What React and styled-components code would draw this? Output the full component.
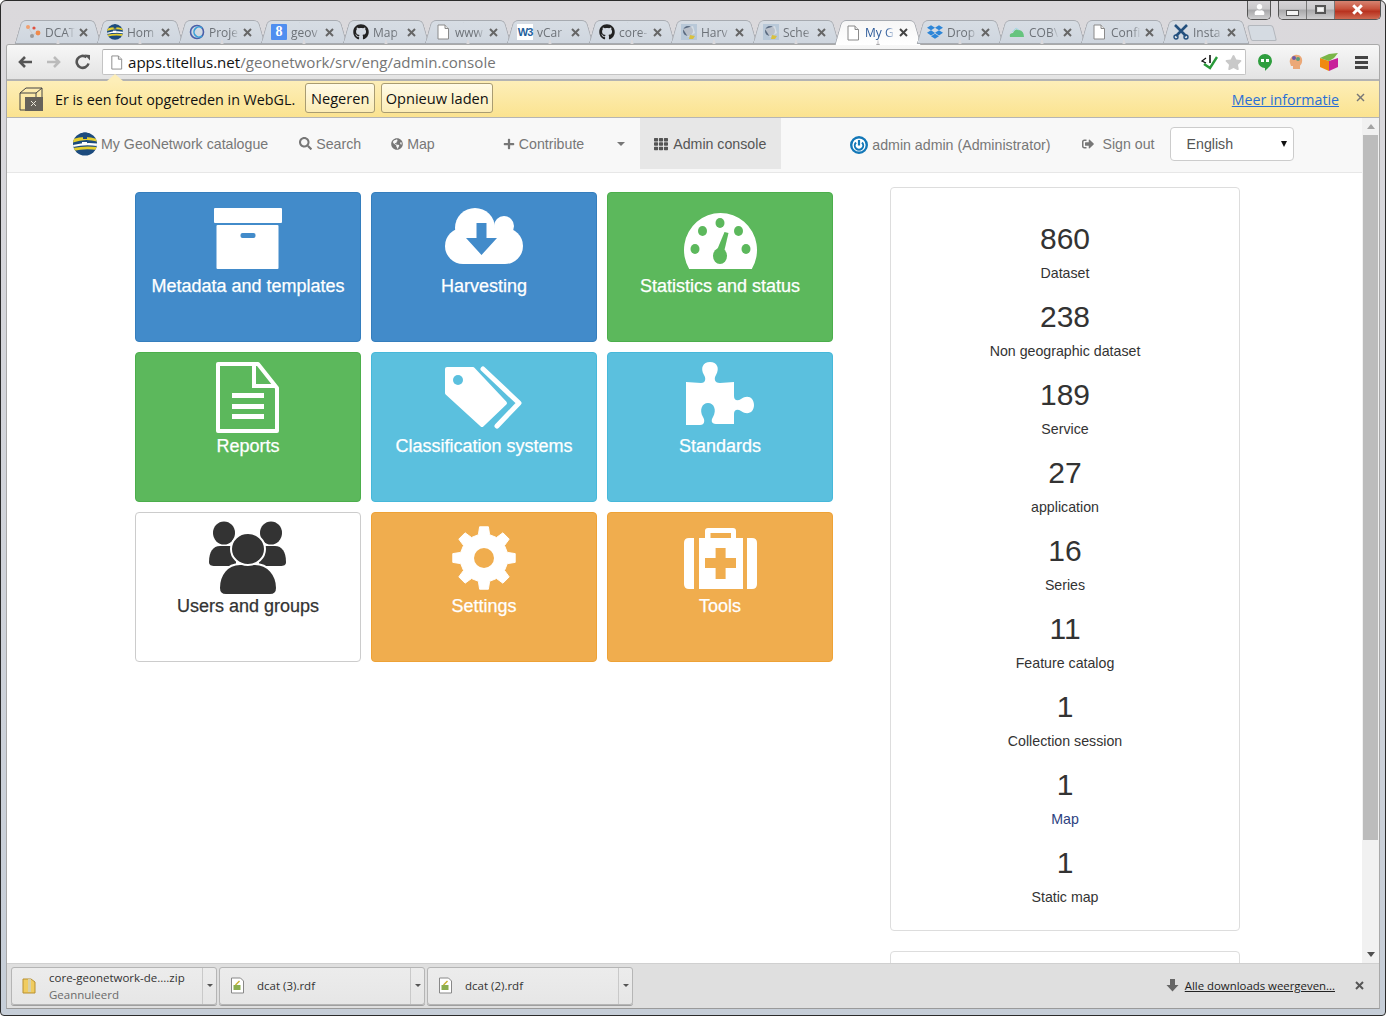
import React from 'react'
import styled, { createGlobalStyle } from 'styled-components'
import { FaGithub, FaDropbox, FaSearch, FaGlobeAmericas, FaPlus, FaTh, FaSignOutAlt, FaUser, FaStar } from 'react-icons/fa'

const GlobalStyle = createGlobalStyle`
  html, body {
    margin: 0;
    padding: 0;
    overflow: hidden;
    background: #fff;
  }
`;

const UI_FONT = `"Open Sans", "Noto Sans", sans-serif`;
const PAGE_FONT = `"Liberation Sans", Arial, sans-serif`;

/* ---------- window chrome ---------- */

const Win = styled.div`
  width: 1386px;
  height: 1016px;
  box-sizing: border-box;
  display: flex;
  flex-direction: column;
  overflow: hidden;
  border: 1px solid #2b2b2b;
  border-radius: 6px 6px 4px 4px;
  padding-bottom: 6px;
  background: linear-gradient(#dbd9dc 0, #d9d8dc 130px, #c6ced8 100%);
  font-family: ${UI_FONT};
`;

const CaptionRow = styled.div`
  height: 19px;
  flex: none;
  display: flex;
  justify-content: flex-end;
  gap: 7px;
  padding-right: 4px;
`;

const CaptionGroup = styled.div`
  display: flex;
  margin-top: -1px;
  height: 19px;
  border: 1px solid #555;
  border-top: none;
  border-radius: 0 0 5px 5px;
  overflow: hidden;
`;

const CaptionBtn = styled.div`
  width: ${p => p.$w}px;
  display: flex;
  align-items: center;
  justify-content: center;
  color: #fff;
  border-left: ${p => (p.$first ? 'none' : '1px solid #777')};
  background: ${p => (p.$close
    ? 'linear-gradient(#d98a78 0, #c8543e 45%, #b8321f 60%, #cf6a52 100%)'
    : 'linear-gradient(#d8d6d9 0, #c9c8ca 45%, #a9a9ab 55%, #cfcfd0 100%)')};
`;

const MinGlyph = styled.span`
  width: 11px;
  height: 4px;
  margin-top: 6px;
  background: #f4f4f4;
  border: 1px solid #555;
`;

const MaxGlyph = styled.span`
  width: 7px;
  height: 5px;
  background: #f4f4f4;
  border: 2px solid #555;
  box-shadow: inset 0 0 0 1px #ddd;
`;

const TabStrip = styled.div`
  height: 24px;
  flex: none;
  display: flex;
  padding-left: 13px;
  position: relative;
  z-index: 1;
`;

const Tab = styled.div`
  position: relative;
  isolation: isolate;
  box-sizing: border-box;
  width: 82px;
  height: ${p => (p.$active ? 25 : 24)}px;
  flex: none;
  display: flex;
  align-items: center;
  padding: 0 8px 0 11px;
  font-size: 12px;
  color: ${p => (p.$active ? '#2c5a9a' : '#6d7278')};
  &::before, &::after {
    content: '';
    position: absolute;
    top: 0;
    bottom: 0;
    width: 42px;
    z-index: -1;
    box-sizing: border-box;
    border: 1px solid #a7abb1;
    border-bottom: ${p => (p.$active ? 'none' : '1px solid #a7abb1')};
    background: ${p => (p.$active ? 'linear-gradient(#f6f6f6, #fff)' : 'linear-gradient(#d7dde4, #cfd6df)')};
  }
  &::before {
    left: 4px;
    border-right: none;
    border-radius: 5px 0 0 0;
    transform: skewX(-16deg);
  }
  &::after {
    right: -2px;
    border-left: none;
    border-radius: 0 5px 0 0;
    transform: skewX(16deg);
  }
`;

const NewTab = styled.div`
  width: 24px;
  height: 14px;
  margin: 5px 0 0 5px;
  background: #d5dbe2;
  border: 1px solid #b3b7bd;
  border-radius: 3px 3px 2px 2px;
  transform: skewX(14deg);
`;

const Fav = styled.span`
  width: 16px;
  height: 16px;
  flex: none;
  display: flex;
  align-items: center;
  justify-content: center;
`;

const TabLabel = styled.span`
  width: 30px;
  margin-left: 4px;
  overflow: hidden;
  white-space: nowrap;
  -webkit-mask-image: linear-gradient(to right, #000 70%, transparent);
  mask-image: linear-gradient(to right, #000 70%, transparent);
`;

const TabClose = styled.svg`
  width: 9px;
  height: 9px;
  margin-left: auto;
  flex: none;
`;

const W3Box = styled.span`
  width: 16px;
  height: 16px;
  background: #fff;
  color: #1f5f9c;
  font: bold 11px/16px ${PAGE_FONT};
  letter-spacing: -1px;
  text-align: center;
`;

const GBox = styled.span`
  width: 16px;
  height: 16px;
  background: #4f8ef0;
  color: #fff;
  border-radius: 1px;
  font: bold 14px/15px "Liberation Serif", serif;
  text-align: center;
`;

const Surface = styled.div`
  flex: 1;
  min-height: 0;
  margin: 0 5px;
  display: flex;
  flex-direction: column;
  border: 1px solid #a9a9a9;
  border-bottom: 1px solid #9a9a9a;
  border-radius: 3px 3px 0 0;
  overflow: hidden;
`;

const Toolbar = styled.div`
  height: 34px;
  flex: none;
  display: flex;
  align-items: center;
  border-bottom: 2px solid #b3b3b3;
  background: linear-gradient(#f7f7f7, #e3e3e3);
`;

const NavGlyph = styled.svg`
  width: 16px;
  height: 16px;
  flex: none;
  margin-left: ${p => p.$ml}px;
`;

const Omnibox = styled.div`
  width: 1144px;
  height: 26px;
  margin-left: 11px;
  flex: none;
  box-sizing: border-box;
  display: flex;
  align-items: center;
  padding: 0 3px 0 6px;
  background: #fff;
  border: 1px solid #c4c4c4;
  border-top-color: #a8a8a8;
  border-radius: 2px;
  font-size: 15.1px;
  color: #757575;
`;

const UrlHost = styled.span`
  color: #111;
`;

const UrlText = styled.span`
  margin-left: 4px;
  white-space: nowrap;
`;

const OmniEnd = styled.span`
  margin-left: auto;
  display: flex;
  align-items: center;
  gap: 6px;
  color: #c9c9c9;
`;

const ExtRow = styled.div`
  display: flex;
  align-items: center;
  gap: 14px;
  margin-left: 11px;
`;

const MenuBars = styled.span`
  width: 13px;
  height: 13px;
  margin-left: 2px;
  background: repeating-linear-gradient(#444 0 3px, transparent 3px 5px);
`;

/* ---------- infobar ---------- */

const Infobar = styled.div`
  position: relative;
  height: 36px;
  flex: none;
  display: flex;
  align-items: center;
  padding-left: 12px;
  font-size: 14.3px;
  color: #111;
  background: linear-gradient(#fdeeb8, #fbe390);
  border-bottom: 1px solid #b5b5b5;
  &::before {
    content: '';
    position: absolute;
    left: 100px;
    top: -7px;
    width: 16px;
    height: 7px;
    background: #fdeeb8;
    clip-path: polygon(50% 0, 100% 100%, 0 100%);
  }
`;

const InfoText = styled.span`
  margin: 1px 0 0 11px;
  white-space: nowrap;
`;

const InfoBtn = styled.div`
  height: 30px;
  margin-left: ${p => p.$ml}px;
  margin-top: -3px;
  box-sizing: border-box;
  width: ${p => p.$w}px;
  display: flex;
  align-items: center;
  justify-content: center;
  border: 1px solid #a99c72;
  border-radius: 3px;
  background: linear-gradient(#fffbe8, #fcedb6);
  font-size: 14.6px;
  white-space: nowrap;
`;

const InfoLink = styled.a`
  margin: 1px 0 0 auto;
  color: #2a6fd6;
  font-size: 14.2px;
  text-decoration: underline;
  white-space: nowrap;
`;

const InfoClose = styled.svg`
  width: 9px;
  height: 9px;
  margin: -4px 14px 0 17px;
`;

/* ---------- page ---------- */

const PageRow = styled.div`
  flex: 1;
  min-height: 0;
  display: flex;
  background: #fff;
`;

const Page = styled.div`
  flex: 1;
  min-width: 0;
  overflow: hidden;
  font-family: ${PAGE_FONT};
  color: #333;
`;

const Navbar = styled.div`
  height: 54px;
  display: flex;
  align-items: flex-start;
  padding-left: 66px;
  background: #f8f8f8;
  border-bottom: 1px solid #e7e7e7;
  font-size: 14.2px;
  color: #777;
`;

const NavItem = styled.div`
  height: 51px;
  flex: none;
  display: flex;
  align-items: center;
  gap: ${p => p.$gap ?? 4}px;
  margin-left: ${p => p.$ml ?? 0}px;
  padding: ${p => (p.$active ? '0 15px 0 14px' : '0')};
  background: ${p => (p.$active ? '#e7e7e7' : 'transparent')};
  color: ${p => (p.$active ? '#555' : '#777')};
  white-space: nowrap;
`;

const Caret = styled.span`
  width: 0;
  height: 0;
  margin-left: ${p => p.$ml}px;
  align-self: center;
  margin-top: -2px;
  border-left: 4px solid transparent;
  border-right: 4px solid transparent;
  border-top: 4px solid #777;
`;

const PowerIcon = styled.svg`
  width: 18px;
  height: 18px;
  margin-top: 2px;
  flex: none;
`;

const UserText = styled.span`
  margin-top: 2px;
`;

const LangSelect = styled.div`
  width: 124px;
  height: 34px;
  margin: 9px 0 0 15px;
  box-sizing: border-box;
  flex: none;
  display: flex;
  align-items: center;
  justify-content: space-between;
  padding: 0 6px 0 16px;
  background: #fff;
  border: 1px solid #ccc;
  border-radius: 4px;
  color: #555;
`;

const SelectArrow = styled.span`
  width: 0;
  height: 0;
  border-left: 3.5px solid transparent;
  border-right: 3.5px solid transparent;
  border-top: 6px solid #111;
`;

const Dashboard = styled.div`
  display: flex;
  align-items: flex-start;
  padding-left: 128px;
`;

const TileGrid = styled.div`
  display: grid;
  grid-template-columns: repeat(3, 226px);
  grid-auto-rows: 150px;
  gap: 10px;
  margin-top: 19px;
`;

const TONES = {
  primary: { bg: '#428bca', border: '#357ebd', fg: '#fff' },
  success: { bg: '#5cb85c', border: '#4cae4c', fg: '#fff' },
  info: { bg: '#5bc0de', border: '#46b8da', fg: '#fff' },
  warning: { bg: '#f0ad4e', border: '#eea236', fg: '#fff' },
  plain: { bg: '#fff', border: '#ccc', fg: '#333' },
};

const Tile = styled.div`
  box-sizing: border-box;
  border: 1px solid ${p => TONES[p.$tone].border};
  border-radius: 4px;
  background: ${p => TONES[p.$tone].bg};
  color: ${p => TONES[p.$tone].fg};
  text-align: center;
`;

const TileIcon = styled.svg`
  display: block;
  width: 224px;
  height: 83px;
`;

const TileLabel = styled.div`
  font-size: 18px;
  line-height: 20px;
  font-weight: 500;
  -webkit-text-stroke: 0.25px currentColor;
`;

const SideColumn = styled.div`
  width: 350px;
  margin: 14px 0 0 57px;
  flex: none;
`;

const Panel = styled.div`
  box-sizing: border-box;
  height: ${p => p.$h}px;
  margin-bottom: 20px;
  padding: 33px 0 0;
  border: 1px solid #ddd;
  border-radius: 4px;
  text-align: center;
  background: #fff;
`;

const Stat = styled.div`
  height: 78px;
`;

const StatNumber = styled.div`
  font-size: 30px;
  line-height: 36px;
  color: #333;
`;

const StatLabel = styled.div`
  margin-top: 6px;
  font-size: 14.2px;
  line-height: 20px;
  color: ${p => (p.$link ? '#2d3f80' : '#333')};
`;

const Scrollbar = styled.div`
  width: 17px;
  flex: none;
  display: flex;
  flex-direction: column;
  background: #f1f1f1;
`;

const ScrollBtn = styled.div`
  height: 17px;
  flex: none;
  display: flex;
  align-items: center;
  justify-content: center;
  margin-top: ${p => (p.$up ? '0' : 'auto')};
  &::after {
    content: '';
    border-left: 4px solid transparent;
    border-right: 4px solid transparent;
    ${p => (p.$up ? 'border-bottom: 5px solid #a3a3a3;' : 'border-top: 5px solid #505050;')}
  }
`;

const ScrollThumb = styled.div`
  height: 705px;
  margin: 0 1px;
  background: #bcbcbc;
`;

/* ---------- download shelf ---------- */

const Shelf = styled.div`
  height: 43px;
  flex: none;
  display: flex;
  align-items: center;
  padding: 0 15px 1px 4px;
  background: #dfdfdf;
  border-top: 1px solid #d0d0d0;
  font-size: 11.5px;
  color: #333;
  gap: 2px;
`;

const Chip = styled.div`
  box-sizing: border-box;
  width: 206px;
  height: 38px;
  display: flex;
  background: linear-gradient(#ececec, #e6e6e6);
  border: 1px solid #b5b5b5;
  border-radius: 3px;
  box-shadow: 0 1px 0 #9f9f9f;
`;

const ChipBody = styled.div`
  flex: 1;
  display: flex;
  align-items: center;
  padding-left: 10px;
  gap: 11px;
`;

const ChipText = styled.div`
  line-height: 17px;
  white-space: nowrap;
`;

const ChipSub = styled.div`
  color: #6b6b6b;
`;

const ChipMenu = styled.div`
  width: 13px;
  flex: none;
  display: flex;
  align-items: center;
  justify-content: center;
  border-left: 1px solid #c9c9c9;
  &::after {
    content: '';
    border-left: 3px solid transparent;
    border-right: 3px solid transparent;
    border-top: 3px solid #555;
  }
`;

const ShelfEnd = styled.div`
  margin-left: auto;
  display: flex;
  align-items: center;
`;

const AllLink = styled.a`
  margin-left: 6px;
  color: #222;
  font-size: 11.4px;
  text-decoration: underline;
  white-space: nowrap;
`;

const ShelfClose = styled.svg`
  width: 9px;
  height: 9px;
  margin-left: 20px;
`;

/* ---------- drawings ---------- */

const Cross = ({ color = '#666', w = 2 }) => (
  <>
    <line x1="1" y1="1" x2="8" y2="8" stroke={color} strokeWidth={w} />
    <line x1="8" y1="1" x2="1" y2="8" stroke={color} strokeWidth={w} />
  </>
);

const DocIcon = ({ size = 16 }) => (
  <svg width={size} height={size} viewBox="0 0 16 16">
    <path d="M3 1H10L13.5 4.5V15H3Z" fill="#fff" stroke="#8a8a8a" />
    <path d="M10 1V4.5H13.5" fill="#e8e8e8" stroke="#8a8a8a" />
  </svg>
);

const GeoLogo = ({ size = 24, id = 'geo-clip' }) => (
  <svg width={size} height={size} viewBox="0 0 24 24">
    <defs>
      <clipPath id={id}><ellipse cx="12" cy="12" rx="12" ry="11.5" /></clipPath>
    </defs>
    <g clipPath={`url(#${id})`}>
      <rect width="24" height="24" fill="#1c4b7e" />
      <path d="M0 7Q12 3 24 7V9.500Q12 6 0 10.500Z" fill="#e6cf2e" />
      <path d="M0 13Q12 10 24 11.500V14Q12 12 0 15Z" fill="#fff" />
      <path d="M0 16Q12 13.500 24 15V18Q12 16 0 19Z" fill="#e6cf2e" />
      <rect x="10" y="0" width="4" height="7" fill="#1c4b7e" />
      <rect x="9" y="10" width="5" height="3" fill="#fff" />
    </g>
  </svg>
);

const Favicon = ({ kind }) => {
  switch (kind) {
    case 'dots':
      return (
        <svg width="16" height="16" viewBox="0 0 16 16">
          <path d="M3 3L8 11L13 8" stroke="#ccc" fill="none" />
          <circle cx="3" cy="3" r="2" fill="#f0a070" />
          <circle cx="9" cy="4" r="1.6" fill="#e05040" />
          <circle cx="7" cy="12" r="2" fill="#999" />
          <circle cx="13" cy="9" r="2.4" fill="#f08a4a" />
        </svg>
      );
    case 'geo':
      return <GeoLogo size={16} id="geo-tab-clip" />;
    case 'ring':
      return (
        <svg width="16" height="16" viewBox="0 0 16 16">
          <circle cx="8" cy="8" r="6.5" fill="none" stroke="#4a5fa8" strokeWidth="1.6" />
          <path d="M13 4A5 5 0 1 0 13 12" fill="none" stroke="#3aa0d8" strokeWidth="1.6" />
        </svg>
      );
    case 'google':
      return <GBox>8</GBox>;
    case 'github':
      return <FaGithub size={16} color="#222" />;
    case 'w3':
      return <W3Box>W3</W3Box>;
    case 'globe':
      return (
        <svg width="16" height="16" viewBox="0 0 16 16">
          <rect width="16" height="16" fill="#b8c8d8" />
          <circle cx="7" cy="7" r="5" fill="#5a6a80" />
          <path d="M2 5L12 2L14 9L7 13Z" fill="#e2e6ea" opacity=".7" />
          <path d="M9 11L14 12L12 15L8 15Z" fill="#d8c040" />
        </svg>
      );
    case 'dropbox':
      return <FaDropbox size={16} color="#2d86d8" />;
    case 'cloud':
      return (
        <svg width="16" height="16" viewBox="0 0 16 16">
          <path d="M1 13Q0 9 4 9Q6 4 10 6Q15 7 15 13Z" fill="#66c47e" />
          <path d="M3 8L7 4L10 6" fill="none" stroke="#a8d8e8" />
        </svg>
      );
    case 'tools':
      return (
        <svg width="16" height="16" viewBox="0 0 16 16">
          <path d="M2 1L13 12M14 1L3 12" stroke="#23507e" strokeWidth="2.6" />
          <circle cx="3" cy="13" r="2" fill="none" stroke="#23507e" strokeWidth="1.4" />
          <circle cx="13" cy="13" r="2" fill="none" stroke="#23507e" strokeWidth="1.4" />
        </svg>
      );
    default:
      return <DocIcon />;
  }
};

const gearPath = (cx, cy, outer, root, teeth) => {
  const pts = [];
  const step = (Math.PI * 2) / teeth;
  for (let i = 0; i < teeth; i++) {
    const a = i * step - Math.PI / 2;
    pts.push([a - step * 0.3, root], [a - step * 0.18, outer], [a + step * 0.18, outer], [a + step * 0.3, root]);
  }
  const d = pts.map(([a, r], i) => `${i ? 'L' : 'M'}${(cx + r * Math.cos(a)).toFixed(1)} ${(cy + r * Math.sin(a)).toFixed(1)}`).join(' ');
  return `${d} Z`;
};

const ArchiveIcon = () => (
  <TileIcon viewBox="136 193 224 83">
    <rect x="214" y="208" width="68" height="15" rx="1" fill="#fff" />
    <rect x="216.500" y="225" width="62" height="44" rx="1" fill="#fff" />
    <rect x="240.500" y="233" width="15" height="5" rx="2" fill="#428bca" />
  </TileIcon>
);

const CloudIcon = () => (
  <TileIcon viewBox="372 193 224 83">
    <g fill="#fff">
      <circle cx="475" cy="228" r="20" />
      <circle cx="504" cy="226" r="10" />
      <circle cx="463" cy="246" r="18" />
      <circle cx="505" cy="246" r="18" />
      <rect x="463" y="228" width="42" height="36" />
    </g>
    <path d="M476.500 223H486.500V238H497L481.500 255L466 238H476.500Z" fill="#428bca" />
  </TileIcon>
);

const GaugeIcon = () => (
  <TileIcon viewBox="608 193 224 83">
    <path d="M689.200 269A36.500 37 0 1 1 751.800 269Z" fill="#fff" />
    <g fill="#5cb85c">
      <ellipse cx="720" cy="223" rx="4.500" ry="5" />
      <ellipse cx="702.500" cy="231" rx="4.500" ry="5" />
      <ellipse cx="738.500" cy="231" rx="4.500" ry="5" />
      <ellipse cx="695" cy="249" rx="4.500" ry="5" />
      <ellipse cx="746" cy="249" rx="4.500" ry="5" />
      <ellipse cx="720" cy="256" rx="7" ry="8" />
      <path d="M724.500 232L728.500 233L724 252L717 250Z" />
    </g>
  </TileIcon>
);

const ReportIcon = () => (
  <TileIcon viewBox="136 353 224 83">
    <path d="M218 364H258L277 388V431H218Z" fill="none" stroke="#fff" strokeWidth="4" strokeLinejoin="round" />
    <path d="M254 365V386H276" fill="none" stroke="#fff" strokeWidth="4" />
    <rect x="232" y="393" width="32" height="5" fill="#fff" />
    <rect x="232" y="404" width="32" height="5" fill="#fff" />
    <rect x="232" y="414" width="32" height="5" fill="#fff" />
  </TileIcon>
);

const TagsIcon = () => (
  <TileIcon viewBox="372 353 224 83">
    <path d="M447 369H473L505 403L482 425L447 393Z" fill="#fff" stroke="#fff" strokeWidth="4" strokeLinejoin="round" />
    <circle cx="458" cy="380" r="5" fill="#5bc0de" />
    <path d="M483 369L519 403L497 426" fill="none" stroke="#fff" strokeWidth="5" strokeLinejoin="round" strokeLinecap="round" />
  </TileIcon>
);

const PuzzleIcon = () => (
  <TileIcon viewBox="608 353 224 83">
    <path
      d="M686 382L701 383C706 383 706 378 704 375C700 368 703 362 710 362C717 362 720 368 716 375C714 378 714 383 720 383L734 382L734 396C734 401 738 401 741 399C748 394 754 398 754 405C754 412 748 416 741 411C738 409 734 409 734 414L734 424L716 424C711 424 711 420 713 417C717 410 714 403 708 403C702 403 699 410 703 417C705 420 705 425 700 425L686 425Z"
      fill="#fff"
    />
  </TileIcon>
);

const UsersIcon = () => (
  <TileIcon viewBox="136 513 224 83">
    <g fill="#333">
      <ellipse cx="224" cy="533" rx="11" ry="11.500" />
      <ellipse cx="271" cy="533" rx="11" ry="11.500" />
      <path d="M209 562C209 552 213 546 220 546H236V566H215C211 566 209 565 209 562Z" />
      <path d="M286 562C286 552 282 546 275 546H259V566H280C284 566 286 565 286 562Z" />
      <path d="M219 588C219 575 227 564 240 564H255C268 564 277 575 277 588Q277 595 270 595H226Q219 595 219 588Z" stroke="#fff" strokeWidth="2" />
      <ellipse cx="248" cy="549" rx="17" ry="16" stroke="#fff" strokeWidth="2" />
    </g>
  </TileIcon>
);

const GearIcon = () => (
  <TileIcon viewBox="372 513 224 83">
    <path d={gearPath(484, 558, 31.500, 24, 8)} fill="#fff" strokeLinejoin="round" stroke="#fff" />
    <circle cx="484" cy="558" r="10" fill="#f0ad4e" />
  </TileIcon>
);

const MedkitIcon = () => (
  <TileIcon viewBox="608 513 224 83">
    <g fill="#fff">
      <path d="M694 538H689Q684 538 684 543V584Q684 589 689 589H694Z" />
      <path d="M747 538H752Q757 538 757 543V584Q757 589 752 589H747Z" />
      <path d="M699 538H705V531Q705 528 708 528H733Q736 528 736 531V538H743V589H699ZM710.500 533V538H731V533Z" fillRule="evenodd" />
    </g>
    <path d="M715.600 548H725.600V558H736V568H725.600V579H715.600V568H705V558H715.600Z" fill="#f0ad4e" />
  </TileIcon>
);

const RdfIcon = () => (
  <svg width="16" height="17" viewBox="0 0 15 17">
    <path d="M1 1H10L13 4V16H1Z" fill="#fff" stroke="#888" />
    <rect x="3" y="8" width="7" height="5" fill="#8cae50" />
    <path d="M5 8L9 4" stroke="#c9b030" strokeWidth="1.4" />
  </svg>
);

/* ---------- data ---------- */

const TABS = [
  ['DCAT', 'dots'], ['Hom', 'geo'], ['Proje', 'ring'], ['geov', 'google'], ['Map', 'github'],
  ['www', 'doc'], ['vCar', 'w3'], ['core-', 'github'], ['Harv', 'globe'], ['Sche', 'globe'],
  ['My G', 'doc', true], ['Drop', 'dropbox'], ['COB\\', 'cloud'], ['Confi', 'doc'], ['Insta', 'tools'],
];

const TILES = [
  ['Metadata and templates', 'primary', ArchiveIcon],
  ['Harvesting', 'primary', CloudIcon],
  ['Statistics and status', 'success', GaugeIcon],
  ['Reports', 'success', ReportIcon],
  ['Classification systems', 'info', TagsIcon],
  ['Standards', 'info', PuzzleIcon],
  ['Users and groups', 'plain', UsersIcon],
  ['Settings', 'warning', GearIcon],
  ['Tools', 'warning', MedkitIcon],
];

const STATS = [
  ['860', 'Dataset'], ['238', 'Non geographic dataset'], ['189', 'Service'],
  ['27', 'application'], ['16', 'Series'], ['11', 'Feature catalog'],
  ['1', 'Collection session'], ['1', 'Map', true], ['1', 'Static map'],
];

const App = () => {
  return (
    <Win>
      <GlobalStyle />

      <CaptionRow>
        <CaptionGroup>
          <CaptionBtn $w={22} $first><FaUser size={11} /></CaptionBtn>
        </CaptionGroup>
        <CaptionGroup>
          <CaptionBtn $w={27} $first><MinGlyph /></CaptionBtn>
          <CaptionBtn $w={27}><MaxGlyph /></CaptionBtn>
          <CaptionBtn $w={45} $close>
            <svg width="13" height="11" viewBox="0 0 9 9"><Cross color="#fff" w={2.4} /></svg>
          </CaptionBtn>
        </CaptionGroup>
      </CaptionRow>

      <TabStrip>
        {TABS.map(([label, icon, active], i) => (
          <Tab key={i} $active={active}>
            <Fav><Favicon kind={icon} /></Fav>
            <TabLabel>{label}</TabLabel>
            <TabClose viewBox="0 0 9 9"><Cross color={active ? '#444' : '#666'} /></TabClose>
          </Tab>
        ))}
        <NewTab />
      </TabStrip>

      <Surface>
        <Toolbar>
          <NavGlyph $ml={10} viewBox="0 0 16 16">
            <path d="M15 8H3M8 3L3 8L8 13" fill="none" stroke="#555" strokeWidth="2.6" />
          </NavGlyph>
          <NavGlyph $ml={13} viewBox="0 0 16 16">
            <path d="M1 8H13M8 3L13 8L8 13" fill="none" stroke="#bbb" strokeWidth="2.6" />
          </NavGlyph>
          <NavGlyph $ml={13} viewBox="0 0 16 16">
            <path d="M13.500 9.500A6 6 0 1 1 11.500 3.200" fill="none" stroke="#555" strokeWidth="2.6" />
            <path d="M9.500 0.500L15 1V6.500Z" fill="#555" />
          </NavGlyph>
          <Omnibox>
            <DocIcon size={15} />
            <UrlText><UrlHost>apps.titellus.net</UrlHost>/geonetwork/srv/eng/admin.console</UrlText>
            <OmniEnd>
              <svg width="18" height="18" viewBox="0 0 18 18">
                <path d="M3 11L9 15L16 4" fill="none" stroke="#2a9a3a" strokeWidth="2.4" />
                <path d="M5 5L1 8L5 10" fill="none" stroke="#111" strokeWidth="1.2" />
                <path d="M9 2V10" stroke="#111" strokeWidth="1.6" />
              </svg>
              <FaStar size={17} />
            </OmniEnd>
          </Omnibox>
          <ExtRow>
            <svg width="16" height="19" viewBox="0 0 16 19">
              <path d="M8 1A7 7 0 0 1 15 8C15 12 11 15 8 18V15A7 7 0 0 1 8 1Z" fill="#2f9e3e" />
              <rect x="4" y="6" width="3" height="3" fill="#fff" />
              <rect x="9" y="6" width="3" height="3" fill="#fff" />
            </svg>
            <svg width="18" height="18" viewBox="0 0 18 18">
              <path d="M8 2C13 1 16 5 15 9C15 11 13 12 13 13V16H6V13H4L3 10C2 7 4 3 8 2Z" fill="#eba877" />
              <circle cx="7" cy="5" r="2" fill="#6a5aa8" />
              <circle cx="11" cy="6" r="2" fill="#5a9a7a" />
            </svg>
            <svg width="20" height="20" viewBox="0 0 20 20">
              <path d="M1 6L10 9V19L1 15Z" fill="#f08a10" />
              <path d="M10 9L19 6V15L10 19Z" fill="#c8209a" />
              <path d="M1 6L10 2L19 1L15 6L10 9Z" fill="#7ab648" />
            </svg>
            <MenuBars />
          </ExtRow>
        </Toolbar>

        <Infobar>
          <svg width="25" height="25" viewBox="0 0 25 25">
            <path d="M1 6H17V23H1ZM1 6L7 1H23L17 6M23 1V18L17 23" fill="none" stroke="#444" />
            <rect x="6" y="10" width="18" height="14" fill="#66625a" />
            <path d="M12 14L17 19M17 14L12 19" stroke="#e8e4d8" />
          </svg>
          <InfoText>Er is een fout opgetreden in WebGL.</InfoText>
          <InfoBtn $ml={10} $w={70}>Negeren</InfoBtn>
          <InfoBtn $ml={6} $w={112}>Opnieuw laden</InfoBtn>
          <InfoLink>Meer informatie</InfoLink>
          <InfoClose viewBox="0 0 9 9"><Cross color="#777" w={1.4} /></InfoClose>
        </Infobar>

        <PageRow>
          <Page>
            <Navbar>
              <NavItem>
                <GeoLogo />
                My GeoNetwork catalogue
              </NavItem>
              <NavItem $ml={31}><FaSearch size={13} />Search</NavItem>
              <NavItem $ml={30}><FaGlobeAmericas size={12} />Map</NavItem>
              <NavItem $ml={68}><FaPlus size={12} />Contribute</NavItem>
              <Caret $ml={33} />
              <NavItem $ml={15} $gap={5} $active><FaTh size={14} />Admin console</NavItem>
              <NavItem $ml={69}>
                <PowerIcon viewBox="0 0 18 18">
                  <circle cx="9" cy="9" r="7.800" fill="#fff" stroke="#1478b8" strokeWidth="2.400" />
                  <path d="M6 6.500A4.200 4.200 0 1 0 12 6.500" fill="none" stroke="#1478b8" strokeWidth="2" />
                  <path d="M9 4V9.500" stroke="#1478b8" strokeWidth="2.200" />
                </PowerIcon>
                <UserText>admin admin (Administrator)</UserText>
              </NavItem>
              <NavItem $ml={32} $gap={8}><FaSignOutAlt size={12} />Sign out</NavItem>
              <LangSelect>English<SelectArrow /></LangSelect>
            </Navbar>

            <Dashboard>
              <TileGrid>
                {TILES.map(([label, tone, Icon]) => (
                  <Tile key={label} $tone={tone}>
                    <Icon />
                    <TileLabel>{label}</TileLabel>
                  </Tile>
                ))}
              </TileGrid>
              <SideColumn>
                <Panel $h={744}>
                  {STATS.map(([n, label, link]) => (
                    <Stat key={label}>
                      <StatNumber>{n}</StatNumber>
                      <StatLabel $link={link}>{label}</StatLabel>
                    </Stat>
                  ))}
                </Panel>
                <Panel $h={60} />
              </SideColumn>
            </Dashboard>
          </Page>
          <Scrollbar>
            <ScrollBtn $up />
            <ScrollThumb />
            <ScrollBtn />
          </Scrollbar>
        </PageRow>

        <Shelf>
          <Chip>
            <ChipBody>
              <svg width="16" height="18" viewBox="0 0 16 18">
                <path d="M1 2H9L13 5V16H1Z" fill="#f0cc60" stroke="#b89030" />
                <rect x="6" y="2" width="3" height="13" fill="#d8d0a8" />
              </svg>
              <ChipText>
                core-geonetwork-de....zip
                <ChipSub>Geannuleerd</ChipSub>
              </ChipText>
            </ChipBody>
            <ChipMenu />
          </Chip>
          <Chip>
            <ChipBody><RdfIcon />dcat (3).rdf</ChipBody>
            <ChipMenu />
          </Chip>
          <Chip>
            <ChipBody><RdfIcon />dcat (2).rdf</ChipBody>
            <ChipMenu />
          </Chip>
          <ShelfEnd>
            <svg width="13" height="13" viewBox="0 0 13 13">
              <path d="M4 0H9V6H12.500L6.500 12.500L0.500 6H4Z" fill="#666" />
            </svg>
            <AllLink>Alle downloads weergeven...</AllLink>
            <ShelfClose viewBox="0 0 9 9"><Cross color="#555" /></ShelfClose>
          </ShelfEnd>
        </Shelf>
      </Surface>
    </Win>
  )
}

export default App
